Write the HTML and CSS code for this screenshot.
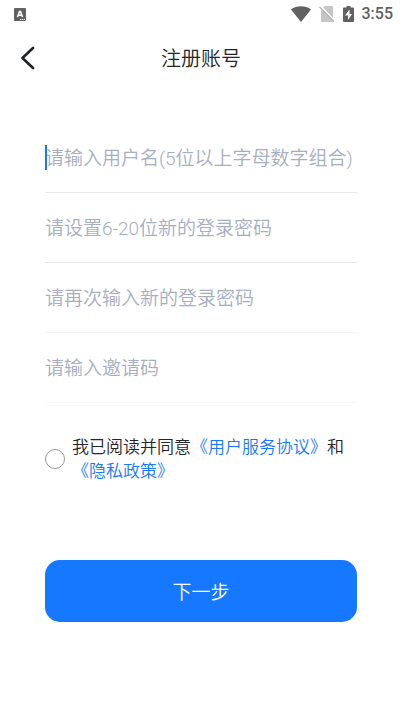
FILE: index.html
```html
<!DOCTYPE html>
<html lang="zh-CN">
<head>
<meta charset="utf-8">
<meta name="viewport" content="width=device-width, initial-scale=1">
<title>注册账号</title>
<link rel="stylesheet" href="styles.css">
</head>
<body>
<div class="status">
  <svg class="status-app" width="12" height="13" viewBox="0 0 12 13" aria-hidden="true">
    <rect width="12" height="13" rx="1" fill="#616161"/>
    <path d="M3.500 9 5.500 3.500h1L8.500 9M4.400 7.200h3.200" fill="none" stroke="#fff" stroke-width="1.500"/>
    <path d="M6 11.500h5" stroke="#fff" stroke-width="1" stroke-dasharray="1.200 .6"/>
  </svg>
  <div class="status-right">
    <svg width="20" height="16" viewBox="0 0 20 16" aria-hidden="true"><path d="M10 16 0 3.500C5.500-.8 14.500-.8 20 3.500Z" fill="#616161"/></svg>
    <svg width="16" height="16" viewBox="0 0 16 16" aria-hidden="true">
      <path d="M6 0h7q1 0 1 1v14q0 1-1 1H3q-1 0-1-1V4Z" fill="#c6c6c6"/>
      <path d="M1.500 0 16 15" stroke="#fff" stroke-width="1.500"/>
      <path d="M.5 1 15 15.500" stroke="#b5b5b5" stroke-width="1.400"/>
    </svg>
    <svg width="11" height="16" viewBox="0 0 11 16" aria-hidden="true">
      <path d="M3.500 0h4v1.500H10q1 0 1 1V15q0 1-1 1H1q-1 0-1-1V2.500q0-1 1-1h2.500Z" fill="#616161"/>
      <path d="M6.500 3.500 2 9.500h3v4.500l4-6H6.500Z" fill="#fff"/>
    </svg>
    <span class="time">3:55</span>
  </div>
</div>
<header class="header">
  <button class="back" type="button" aria-label="返回">
    <svg width="14" height="24" viewBox="0 0 14 24" aria-hidden="true"><path d="M12 2 1.500 12 12 22" fill="none" stroke="#1f2329" stroke-width="2.600" stroke-linecap="round" stroke-linejoin="round"/></svg>
  </button>
  <h1 class="title">注册账号</h1>
</header>
<form class="form">
  <label class="field field-active"><input type="text" aria-label="用户名" placeholder="请输入用户名(5位以上字母数字组合)"></label>
  <label class="field"><input type="password" aria-label="登录密码" placeholder="请设置6-20位新的登录密码"></label>
  <label class="field field-soft"><input type="password" aria-label="确认密码" placeholder="请再次输入新的登录密码"></label>
  <label class="field field-faint"><input type="text" aria-label="邀请码" placeholder="请输入邀请码"></label>
  <div class="agree">
    <input class="radio" type="radio" id="agree">
    <label class="agree-text" for="agree">我已阅读并同意<a href="#terms">《用户服务协议》</a>和<br><a href="#privacy">《隐私政策》</a></label>
  </div>
  <button class="next" type="button">下一步</button>
</form>
</body>
</html>
```
FILE: styles.css
```css
* {
  box-sizing: border-box;
}

body {
  margin: 0;
  background: #fff;
  color: #222529;
  font-family: Roboto, "Noto Sans CJK SC", sans-serif;
  font-weight: 350;
}

button,
input {
  font-family: inherit;
  font-weight: inherit;
}

.status {
  display: flex;
  align-items: center;
  justify-content: space-between;
  height: 28px;
  padding: 0 9px 0 14px;
}

.status svg {
  display: block;
}

.status-right {
  display: flex;
  align-items: center;
  gap: 8px;
}

.time {
  color: #616161;
  font-size: 16px;
  font-weight: 500;
  line-height: 20px;
}

.header {
  display: grid;
  grid-template-columns: 56px 1fr 56px;
  align-items: center;
  height: 60px;
}

.back {
  display: flex;
  align-items: center;
  height: 60px;
  padding: 0 0 0 21px;
  border: 0;
  background: none;
}

.title {
  margin: 0;
  padding-top: 2px;
  font-size: 20px;
  font-weight: inherit;
  line-height: 28px;
  text-align: center;
}

.form {
  padding: 35px 45px 0;
}

.field {
  display: flex;
  position: relative;
  height: 70px;
  border-bottom: 1px solid #e9e9e9;
}

.field-soft {
  border-color: #f3f3f3;
}

.field-faint {
  border-color: #f8f8f8;
}

.field input {
  width: 100%;
  padding: 2px 0 0;
  border: 0;
  outline: 0;
  background: none;
  color: #222529;
  font-size: 19px;
}

.field input::placeholder {
  color: #a6aec0;
  opacity: 1;
}

.field-active::before {
  content: "";
  position: absolute;
  top: 22px;
  left: 0;
  width: 2px;
  height: 25px;
  background: #1677ff;
}

.agree {
  display: flex;
  align-items: center;
  gap: 7px;
  margin-top: 32px;
}

.radio {
  flex: none;
  appearance: none;
  width: 20px;
  height: 20px;
  margin: 0;
  border: 1px solid #999;
  border-radius: 50%;
}

.radio:checked {
  border: 6px solid #1677ff;
}

.agree-text {
  font-size: 17px;
  line-height: 24px;
  white-space: nowrap;
}

.agree-text a {
  color: #1677ff;
  text-decoration: none;
}

.next {
  display: block;
  width: 100%;
  height: 62px;
  margin-top: 77px;
  padding: 0 0 2px;
  border: 0;
  border-radius: 15px;
  background: #1677ff;
  color: #fff;
  font-size: 19px;
}
```
